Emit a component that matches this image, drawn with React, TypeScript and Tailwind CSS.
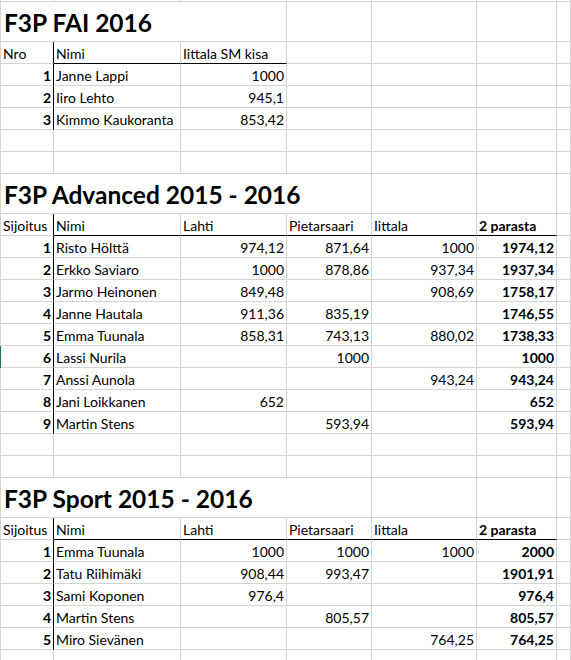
import React from "react";

type B = "g" | "k" | "n";
type C = { t?: string; r?: boolean; b?: boolean; rb?: B; bb?: "g" | "k" };

const W = ["w-[53px]", "w-[127px]", "w-[106px]", "w-[85px]", "w-[105px]", "w-[80px]", "flex-1"];

const RB: Record<B, string> = {
  g: "border-r border-r-[#d4d4d4]",
  k: "border-r border-r-black",
  n: "border-r border-r-transparent",
};
const BB = { g: "border-b border-b-[#d4d4d4]", k: "border-b border-b-black" };

function Row({ cells, h, green }: { cells: C[]; h: string; green?: boolean }) {
  const full: C[] = [];
  for (let i = 0; i < 7; i++) full.push(cells[i] || {});
  return (
    <div className={`flex ${h} border-l ${green ? "border-l-[#217346]" : "border-l-[#d4d4d4]"}`}>
      {full.map((c, i) => (
        <div
          key={i}
          className={`${W[i]} shrink-0 h-full flex items-end ${RB[c.rb || "g"]} ${BB[c.bb || "g"]} ${
            c.r ? "justify-end pr-[2px]" : "justify-start pl-[2px]"
          }`}
        >
          {c.t !== undefined && (
            <span className={`whitespace-nowrap leading-[18px] text-[14px] ${c.b ? "font-bold" : ""}`}>{c.t}</span>
          )}
        </div>
      ))}
    </div>
  );
}

function Title({ text, hide }: { text: string; hide: number }) {
  const cells = [];
  for (let i = 0; i < 7; i++) {
    const hidden = i < hide;
    cells.push(
      <div
        key={i}
        className={`${W[i]} shrink-0 h-full flex items-end ${hidden ? RB.n : RB.g} ${BB.g} ${i === 0 ? "pl-[3px] pb-[2px]" : ""}`}
      >
        {i === 0 && (
          <span className="whitespace-nowrap font-bold text-[24.5px] leading-[32px] relative z-10">{text}</span>
        )}
      </div>
    );
  }
  return <div className="flex h-[40px] border-l border-l-[#d4d4d4]">{cells}</div>;
}

const Empty = () => <Row h="h-[22px]" cells={[]} />;

type D = [string, string, string?, string?, string?, string?];

function Data({ d, green }: { d: D; green?: boolean }) {
  return (
    <Row
      h="h-[22px]"
      green={green}
      cells={[
        { t: d[0], r: true, b: true, rb: "k" },
        { t: d[1] },
        { t: d[2], r: true },
        { t: d[3], r: true },
        { t: d[4], r: true },
        { t: d[5], r: true, b: true },
      ]}
    />
  );
}

const adv: D[] = [
  ["1", "Risto Hölttä", "974,12", "871,64", "1000", "1974,12"],
  ["2", "Erkko Saviaro", "1000", "878,86", "937,34", "1937,34"],
  ["3", "Jarmo Heinonen", "849,48", "", "908,69", "1758,17"],
  ["4", "Janne Hautala", "911,36", "835,19", "", "1746,55"],
  ["5", "Emma Tuunala", "858,31", "743,13", "880,02", "1738,33"],
  ["6", "Lassi Nurila", "", "1000", "", "1000"],
  ["7", "Anssi Aunola", "", "", "943,24", "943,24"],
  ["8", "Jani Loikkanen", "652", "", "", "652"],
  ["9", "Martin Stens", "", "593,94", "", "593,94"],
];

const sport: D[] = [
  ["1", "Emma Tuunala", "1000", "1000", "1000", "2000"],
  ["2", "Tatu Riihimäki", "908,44", "993,47", "", "1901,91"],
  ["3", "Sami Koponen", "976,4", "", "", "976,4"],
  ["4", "Martin Stens", "", "805,57", "", "805,57"],
  ["5", "Miro Sievänen", "", "", "764,25", "764,25"],
];

function BigHeader() {
  return (
    <Row
      h="h-[22px]"
      cells={[
        { t: "Sijoitus", rb: "k" },
        { t: "Nimi", bb: "k" },
        { t: "Lahti", bb: "k" },
        { t: "Pietarsaari", bb: "k" },
        { t: "Iittala", bb: "k" },
        { t: "2 parasta", b: true, bb: "k" },
      ]}
    />
  );
}

export default function App() {
  return (
    <div
      className="w-[571px] h-[660px] overflow-hidden bg-white text-black"
      style={{ fontFamily: "Lato, 'Liberation Sans', sans-serif" }}
    >
      <Row h="h-[2px]" cells={[]} />
      <Title text="F3P FAI 2016" hide={2} />
      <Row
        h="h-[22px]"
        cells={[
          { t: "Nro", rb: "k" },
          { t: "Nimi", bb: "k" },
          { t: "Iittala SM kisa", bb: "k" },
        ]}
      />
      <Row h="h-[22px]" cells={[{ t: "1", r: true, b: true, rb: "k" }, { t: "Janne Lappi" }, { t: "1000", r: true }]} />
      <Row h="h-[22px]" cells={[{ t: "2", r: true, b: true, rb: "k" }, { t: "Iiro Lehto" }, { t: "945,1", r: true }]} />
      <Row h="h-[22px]" cells={[{ t: "3", r: true, b: true, rb: "k" }, { t: "Kimmo Kaukoranta" }, { t: "853,42", r: true }]} />
      <Empty />
      <Empty />
      <Title text="F3P Advanced 2015 - 2016" hide={3} />
      <BigHeader />
      {adv.map((d, i) => (
        <Data key={i} d={d} green={i === 5} />
      ))}
      <Empty />
      <Empty />
      <Title text="F3P Sport 2015 - 2016" hide={3} />
      <BigHeader />
      {sport.map((d, i) => (
        <Data key={i} d={d} />
      ))}
      <Empty />
    </div>
  );
}
